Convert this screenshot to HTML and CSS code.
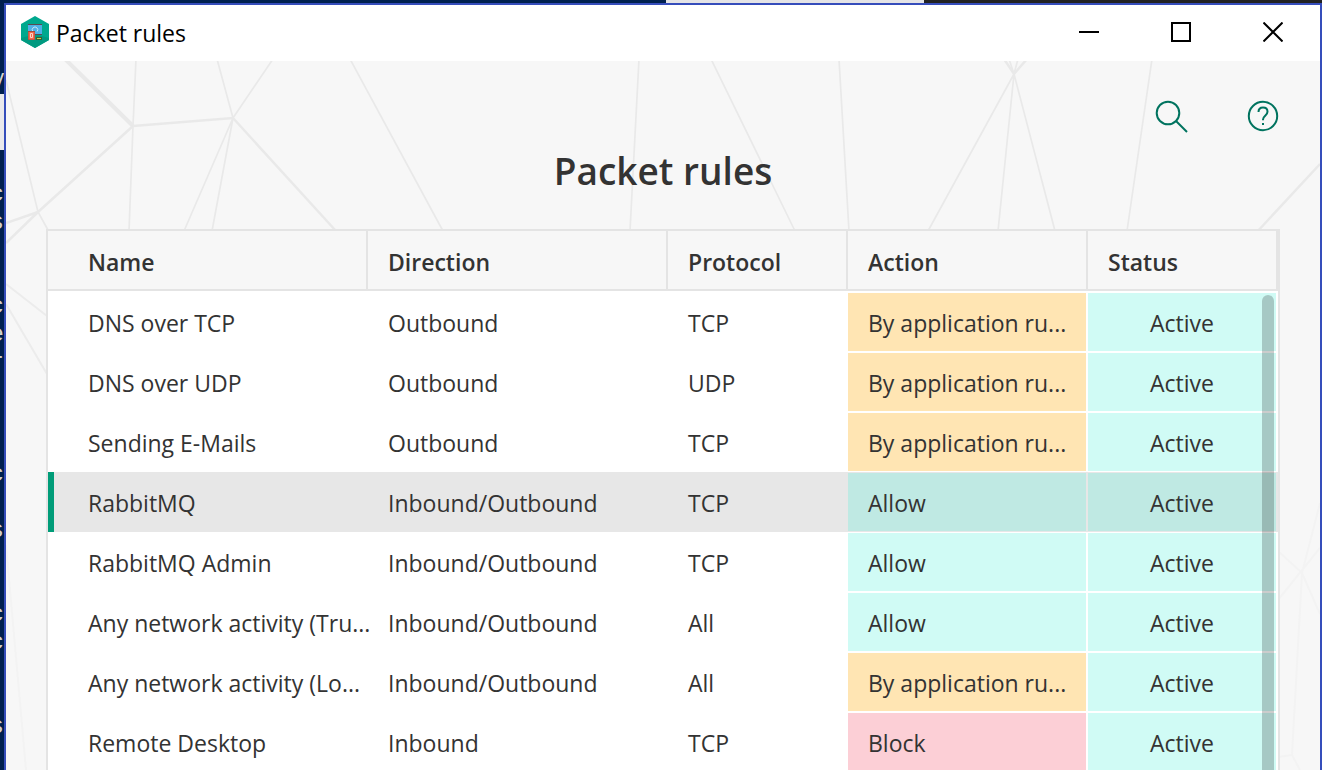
FILE: index.html
```html
<!DOCTYPE html>
<html lang="en">
<head>
<meta charset="utf-8">
<title>Packet rules</title>
<link rel="stylesheet" href="styles.css">
</head>
<body>
<div class="desktop">
  <div class="behind-top" aria-hidden="true"></div>
  <div class="behind-left" aria-hidden="true">
    <span class="behind-tab">y</span>
    <span class="behind-field"></span>
    <pre class="behind-code">c
s


c
e
r



c

s


c
c


s</pre>
  </div>
  <div class="window">
    <header class="titlebar">
      <svg class="app-icon" width="30" height="34" viewBox="0 0 30 34" aria-hidden="true">
        <path fill="#00a88e" d="M15 0 29 8v16l-14 8L1 24V8z"/>
        <path fill="#009a80" d="M1 22l14-4 14 4v2l-14 8-14-8z"/>
        <path fill="#4fb0e6" d="M8 8h14v11H8z"/>
        <path fill="#5b4a50" d="M8 8h14v1H8zM15 18h7v1h-7z"/>
        <path fill="none" stroke="#c9e7f7" d="M13 15.500a2.700 2.700 0 1 1 4 0"/>
        <path fill="#a8483a" d="M8 15h7v9H8z"/>
        <path fill="#f4694c" d="M8.500 16h6v7.500h-6z"/>
        <path fill="none" stroke="#ffd2c4" d="M10.500 17.500h2v4h-2z"/>
        <path fill="#3d5b34" d="M16 21h6v3h-6z"/>
        <path fill="#c5d64a" d="M17 22h4v1h-4z"/>
      </svg>
      <span class="titlebar-text">Packet rules</span>
      <div class="window-controls">
        <button type="button" aria-label="Minimize"><svg width="20" height="20" viewBox="0 0 20 20"><path d="M0 10h20"/></svg></button>
        <button type="button" aria-label="Maximize"><svg width="20" height="20" viewBox="0 0 20 20"><path d="M1 1h18v18H1z"/></svg></button>
        <button type="button" aria-label="Close"><svg width="20" height="20" viewBox="0 0 20 20"><path d="M.5.5l19 19M19.500.5l-19 19"/></svg></button>
      </div>
    </header>
    <main class="content">
      <svg class="mesh" viewBox="6 61 1314 709" preserveAspectRatio="xMidYMin slice" aria-hidden="true">
        <g stroke-width="4"><path d="M65 59 133 126"/></g>
        <g stroke-width="2.500"><path d="M133 126 233 118 336 231M133 126 38 212 6 243M38 212 6 223M1004 59 1014 74 1027 59M1320 164 1256 233"/></g>
        <g stroke-width="1.700"><path d="M136 59 133 126 129 231M217 59 233 118 273 59M184 231 233 118 212 231M6 80 38 212 48 230M350 59 443 231M639 59 630 231M711 59 795 231M839 59 849 231M1009 59 1014 74 1018 59M928 231 1014 74 998 231M1014 74 1055 231M1152 59 1127 231"/></g>
        <g class="mesh-mid" stroke-width="2"><path d="M6 284 47 316M6 304 47 374"/></g>
        <g class="mesh-faint" stroke-width="2"><path d="M6 545 26 770M1278 551 1302 573 1320 503M1320 548 1278 600M1302 573 1320 614M1302 573 1292 755 1300 770M1278 757 1292 755"/></g>
      </svg>
      <div class="tools">
        <button type="button" aria-label="Search"><svg width="34" height="34" viewBox="0 0 34 34"><circle cx="14" cy="14" r="11.300"/><path d="M22 22l11 11"/></svg></button>
        <button type="button" aria-label="Help"><svg width="34" height="34" viewBox="0 0 34 34"><circle cx="17" cy="17" r="14.200"/><path d="M12.500 13c0-2.700 1.800-4.500 4.500-4.500s4.500 1.800 4.500 4.300c0 3.700-4.500 4.200-4.500 7.700v.7M17 24v2"/></svg></button>
      </div>
      <h1>Packet rules</h1>
      <div class="rules">
        <table>
          <colgroup><col><col class="c-direction"><col class="c-protocol"><col class="c-action"><col class="c-status"></colgroup>
          <thead>
            <tr><th scope="col">Name</th><th scope="col">Direction</th><th scope="col">Protocol</th><th scope="col">Action</th><th scope="col">Status</th></tr>
          </thead>
          <tbody>
            <tr><td>DNS over TCP</td><td>Outbound</td><td>TCP</td><td class="by-rules">By application ru...</td><td class="active">Active</td></tr>
            <tr><td>DNS over UDP</td><td>Outbound</td><td>UDP</td><td class="by-rules">By application ru...</td><td class="active">Active</td></tr>
            <tr><td>Sending E-Mails</td><td>Outbound</td><td>TCP</td><td class="by-rules">By application ru...</td><td class="active">Active</td></tr>
            <tr class="selected"><td>RabbitMQ</td><td>Inbound/Outbound</td><td>TCP</td><td class="allow">Allow</td><td class="active">Active</td></tr>
            <tr><td>RabbitMQ Admin</td><td>Inbound/Outbound</td><td>TCP</td><td class="allow">Allow</td><td class="active">Active</td></tr>
            <tr><td>Any network activity (Tru...</td><td>Inbound/Outbound</td><td>All</td><td class="allow">Allow</td><td class="active">Active</td></tr>
            <tr><td>Any network activity (Lo...</td><td>Inbound/Outbound</td><td>All</td><td class="by-rules">By application ru...</td><td class="active">Active</td></tr>
            <tr><td>Remote Desktop</td><td>Inbound</td><td>TCP</td><td class="block">Block</td><td class="active">Active</td></tr>
          </tbody>
        </table>
        <div class="scroll-thumb" aria-hidden="true"></div>
      </div>
    </main>
  </div>
</div>
</body>
</html>
```
FILE: styles.css
```css
* {
  box-sizing: border-box;
}

body {
  margin: 0;
  font-family: "Open Sans", "Noto Sans", sans-serif;
  font-size: 23px;
  line-height: 32px;
  color: #333;
}

.desktop {
  display: grid;
  grid-template-columns: 4px 1fr;
  grid-template-rows: 3px 1fr;
  height: 100vh;
  overflow: hidden;
  background: #00204f;
}

.behind-top {
  grid-column: 1 / -1;
  background: linear-gradient(90deg, #00204f 50.4%, #e4e4e6 50.4% 69.9%, #222 69.9%);
}

.behind-left {
  display: flex;
  flex-direction: column;
  align-items: flex-end;
  overflow: hidden;
  min-height: 0;
  color: #d6d3cc;
}

.behind-tab {
  height: 91px;
  padding-top: 58px;
}

.behind-field {
  flex: none;
  width: 4px;
  height: 56px;
  background: #e9e9ec;
}

.behind-code {
  margin: 0;
  padding-top: 31px;
  font-family: "Liberation Mono", monospace;
  font-size: 24px;
  line-height: 28px;
}

.window {
  display: flex;
  flex-direction: column;
  min-width: 0;
  min-height: 0;
  border: 2px solid #354dbb;
  border-bottom: 0;
  background: #f7f7f7;
}

.titlebar {
  display: flex;
  flex: none;
  align-items: center;
  height: 56px;
  padding-left: 14px;
  background: #fff;
  color: #000;
}

.titlebar-text {
  padding-left: 6px;
}

.window-controls {
  display: flex;
  margin-left: auto;
  padding-right: 1px;
}

button {
  display: flex;
  align-items: center;
  justify-content: center;
  padding: 0;
  border: 0;
  background: none;
}

.window-controls button {
  width: 92px;
  height: 56px;
  padding-bottom: 2px;
}

.window-controls svg {
  fill: none;
  stroke: #000;
  stroke-width: 2;
}

.content {
  position: relative;
  flex: 1;
  min-height: 0;
  padding: 38px 40px 0;
}

.mesh {
  position: absolute;
  top: 0;
  left: 0;
  width: 100%;
  height: 100%;
  fill: none;
  stroke: #e9e9e9;
}

.mesh-mid {
  stroke: #ececec;
}

.mesh-faint {
  stroke: #f3f3f3;
}

.tools {
  position: relative;
  display: flex;
  justify-content: flex-end;
  gap: 58px;
}

.tools svg {
  fill: none;
  stroke: #00735f;
  stroke-width: 2;
}

h1 {
  position: relative;
  margin: 11px 0 31px;
  font-size: 37px;
  font-weight: 600;
  line-height: 54px;
  text-align: center;
}

.rules {
  position: relative;
  border: 2px solid #e4e4e4;
  background: #fff;
}

table {
  width: 100%;
  table-layout: fixed;
  border-collapse: separate;
  border-spacing: 0;
}

.c-direction {
  width: 300px;
}

.c-protocol {
  width: 180px;
}

.c-action {
  width: 240px;
}

.c-status {
  width: 190px;
}

th {
  height: 60px;
  padding: 4px 0 0 20px;
  border-right: 2px solid #e4e4e4;
  border-bottom: 2px solid #e4e4e4;
  background: #f7f7f7;
  font-weight: 600;
  text-align: left;
}

tbody::before {
  content: "";
  display: block;
  height: 1px;
}

td {
  height: 60px;
  padding: 2px 0 0 20px;
  border: 1px solid transparent;
  border-width: 1px 2px 1px 0;
  background-clip: padding-box;
  white-space: nowrap;
}

th:first-child,
td:first-child {
  padding-left: 40px;
}

.by-rules {
  background-color: #ffe5b3;
}

.allow,
.active {
  background-color: #d0fbf5;
}

.block {
  background-color: #fccfd6;
}

.active {
  padding-left: 0;
  text-align: center;
}

.selected {
  background: #e7e7e7;
}

.selected td:first-child {
  background: linear-gradient(90deg, #009c78 6px, transparent 6px) border-box;
}

.selected .allow,
.selected .active {
  background-color: #bfe9e3;
}

.scroll-thumb {
  position: absolute;
  top: 64px;
  right: 4px;
  bottom: 0;
  width: 12px;
  border-radius: 6px 6px 0 0;
  background: rgba(0, 0, 0, 0.2);
}
```
